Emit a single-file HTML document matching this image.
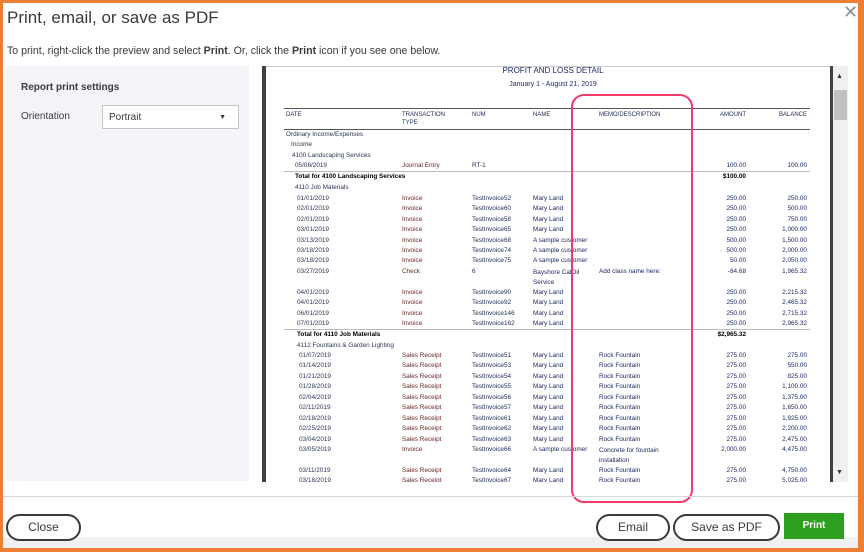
<!DOCTYPE html>
<html><head><meta charset="utf-8"><style>
*{margin:0;padding:0;box-sizing:border-box}
html,body{width:864px;height:552px;overflow:hidden}
body{background:#e8e8e8;position:relative;font-family:"Liberation Sans",sans-serif}
#frame{position:absolute;left:0;top:0;width:864px;height:552px;border:3px solid #ec7f35;border-bottom-width:4px;border-right-width:6px;background:#fff}
.a{position:absolute;white-space:nowrap}
.r{position:absolute;left:0;width:864px;height:9px;font-size:6.4px;line-height:8px}
.r span{position:absolute;white-space:nowrap}
.d{color:#2a3656}.t{color:#6a2626}.n{color:#1e2a55}.m{color:#1e2a60}
.am{color:#1e2a66;right:118px;text-align:right}.bl{color:#1e2a66;right:57px;text-align:right}
.b{font-weight:bold;color:#000}
.btn{position:absolute;top:514px;height:27px;border:2px solid #393a3d;border-radius:14px;font-size:12px;line-height:23px;text-align:center;color:#393a3d;background:#fff;white-space:nowrap}
#rows{position:absolute;left:0;top:2px;width:864px;height:480px}
</style></head><body>
<div id="frame"></div>
<div class="a" style="left:7px;top:8px;font-size:17px;color:#393a3d">Print, email, or save as PDF</div>
<div class="a" style="left:843px;top:2px;font-size:18px;color:#8d9096;font-weight:300">✕</div>
<div class="a" style="left:7px;top:45px;font-size:10.6px;color:#393a3d">To print, right-click the preview and select <b style="font-weight:600">Print</b>. Or, click the <b style="font-weight:600">Print</b> icon if you see one below.</div>
<div class="a" style="left:6px;top:66px;width:243px;height:415px;background:#f4f5f8"></div>
<div class="a" style="left:21px;top:82px;font-size:10px;color:#393a3d;font-weight:600">Report print settings</div>
<div class="a" style="left:21px;top:111px;font-size:10px;color:#393a3d">Orientation</div>
<div class="a" style="left:102px;top:105px;width:137px;height:24px;background:#fff;border:1px solid #c4c4c4;font-size:10px;line-height:24px;padding-left:6px;color:#393a3d">Portrait<span style="position:absolute;right:12px;top:0;font-size:7px">▼</span></div>
<div class="a" style="left:262px;top:66px;width:4px;height:416px;background:#404040"></div>
<div class="a" style="left:266px;top:66px;width:564px;height:416px;background:#fff;border-top:1px solid #ccc"></div>
<div class="a" style="left:830px;top:66px;width:3px;height:416px;background:#404040"></div>
<div class="a" style="left:833px;top:66px;width:15px;height:416px;background:#f0f0f0"></div>
<div class="a" style="left:836px;top:73px;font-size:7px;color:#333">▲</div>
<div class="a" style="left:834px;top:90px;width:13px;height:30px;background:#c1c1c1"></div>
<div class="a" style="left:836px;top:469px;font-size:7px;color:#333">▼</div>
<div class="a" style="left:0;width:864px;text-align:center;top:66px;font-size:8px;color:#1e2a66;padding-left:242px">PROFIT AND LOSS DETAIL</div>
<div class="a" style="left:0;width:864px;text-align:center;top:81px;font-size:7px;color:#1e2a66;padding-left:242px">January 1 - August 21, 2019</div>
<div class="a" style="left:284px;top:108px;width:526px;height:1px;background:#555"></div>
<div class="a" style="left:284px;top:129px;width:526px;height:1px;background:#555"></div>
<div class="a" style="left:284px;top:171px;width:526px;height:1px;background:#bbb"></div>
<div class="a" style="left:284px;top:329px;width:526px;height:1px;background:#bbb"></div>
<div id="rows">
<div class="r" style="top:109px;font-size:6px;color:#1e2a55"><span style="left:286px">DATE</span><span style="left:402px">TRANSACTION<br>TYPE</span><span style="left:472px">NUM</span><span style="left:533px">NAME</span><span style="left:599px">MEMO/DESCRIPTION</span><span style="right:118px">AMOUNT</span><span style="right:57px">BALANCE</span></div>
<div class="r" style="top:129px"><span class="d" style="left:286px">Ordinary Income/Expenses</span></div>
<div class="r" style="top:139px"><span class="d" style="left:291px">Income</span></div>
<div class="r" style="top:150px"><span class="d" style="left:292px">4100 Landscaping Services</span></div>
<div class="r" style="top:160px"><span class="d" style="left:295px">05/06/2019</span><span class="t" style="left:402px">Journal Entry</span><span class="n" style="left:472px">RT-1</span><span class="am">100.00</span><span class="bl">100.00</span></div>
<div class="r" style="top:171px"><span class="b" style="left:295px">Total for 4100 Landscaping Services</span><span class="am b">$100.00</span></div>
<div class="r" style="top:182px"><span class="d" style="left:295px">4110 Job Materials</span></div>
<div class="r" style="top:193px"><span class="d" style="left:297px">01/01/2019</span><span class="t" style="left:402px">Invoice</span><span class="n" style="left:472px">TestInvoice52</span><span class="m" style="left:533px">Mary Land</span><span class="am">250.00</span><span class="bl">250.00</span></div>
<div class="r" style="top:203px"><span class="d" style="left:297px">02/01/2019</span><span class="t" style="left:402px">Invoice</span><span class="n" style="left:472px">TestInvoice60</span><span class="m" style="left:533px">Mary Land</span><span class="am">250.00</span><span class="bl">500.00</span></div>
<div class="r" style="top:214px"><span class="d" style="left:297px">02/01/2019</span><span class="t" style="left:402px">Invoice</span><span class="n" style="left:472px">TestInvoice58</span><span class="m" style="left:533px">Mary Land</span><span class="am">250.00</span><span class="bl">750.00</span></div>
<div class="r" style="top:224px"><span class="d" style="left:297px">03/01/2019</span><span class="t" style="left:402px">Invoice</span><span class="n" style="left:472px">TestInvoice65</span><span class="m" style="left:533px">Mary Land</span><span class="am">250.00</span><span class="bl">1,000.00</span></div>
<div class="r" style="top:235px"><span class="d" style="left:297px">03/13/2019</span><span class="t" style="left:402px">Invoice</span><span class="n" style="left:472px">TestInvoice68</span><span class="m" style="left:533px">A sample customer</span><span class="am">500.00</span><span class="bl">1,500.00</span></div>
<div class="r" style="top:245px"><span class="d" style="left:297px">03/18/2019</span><span class="t" style="left:402px">Invoice</span><span class="n" style="left:472px">TestInvoice74</span><span class="m" style="left:533px">A sample customer</span><span class="am">500.00</span><span class="bl">2,000.00</span></div>
<div class="r" style="top:255px"><span class="d" style="left:297px">03/18/2019</span><span class="t" style="left:402px">Invoice</span><span class="n" style="left:472px">TestInvoice75</span><span class="m" style="left:533px">A sample customer</span><span class="am">50.00</span><span class="bl">2,050.00</span></div>
<div class="r" style="top:266px;height:20px"><span class="d" style="left:297px">03/27/2019</span><span class="t" style="left:402px">Check</span><span class="n" style="left:472px">6</span><span class="m" style="left:533px;line-height:10px">Bayshore CalOil<br>Service</span><span class="m" style="left:599px">Add class name here:</span><span class="am">-84.68</span><span class="bl">1,965.32</span></div>
<div class="r" style="top:287px"><span class="d" style="left:297px">04/01/2019</span><span class="t" style="left:402px">Invoice</span><span class="n" style="left:472px">TestInvoice90</span><span class="m" style="left:533px">Mary Land</span><span class="am">250.00</span><span class="bl">2,215.32</span></div>
<div class="r" style="top:297px"><span class="d" style="left:297px">04/01/2019</span><span class="t" style="left:402px">Invoice</span><span class="n" style="left:472px">TestInvoice92</span><span class="m" style="left:533px">Mary Land</span><span class="am">250.00</span><span class="bl">2,465.32</span></div>
<div class="r" style="top:308px"><span class="d" style="left:297px">06/01/2019</span><span class="t" style="left:402px">Invoice</span><span class="n" style="left:472px">TestInvoice146</span><span class="m" style="left:533px">Mary Land</span><span class="am">250.00</span><span class="bl">2,715.32</span></div>
<div class="r" style="top:318px"><span class="d" style="left:297px">07/01/2019</span><span class="t" style="left:402px">Invoice</span><span class="n" style="left:472px">TestInvoice162</span><span class="m" style="left:533px">Mary Land</span><span class="am">250.00</span><span class="bl">2,965.32</span></div>
<div class="r" style="top:329px"><span class="b" style="left:297px">Total for 4110 Job Materials</span><span class="am b">$2,965.32</span></div>
<div class="r" style="top:340px"><span class="d" style="left:297px">4112 Fountains &amp; Garden Lighting</span></div>
<div class="r" style="top:350px"><span class="d" style="left:299px">01/07/2019</span><span class="t" style="left:402px">Sales Receipt</span><span class="n" style="left:472px">TestInvoice51</span><span class="m" style="left:533px">Mary Land</span><span class="m" style="left:599px">Rock Fountain</span><span class="am">275.00</span><span class="bl">275.00</span></div>
<div class="r" style="top:360px"><span class="d" style="left:299px">01/14/2019</span><span class="t" style="left:402px">Sales Receipt</span><span class="n" style="left:472px">TestInvoice53</span><span class="m" style="left:533px">Mary Land</span><span class="m" style="left:599px">Rock Fountain</span><span class="am">275.00</span><span class="bl">550.00</span></div>
<div class="r" style="top:371px"><span class="d" style="left:299px">01/21/2019</span><span class="t" style="left:402px">Sales Receipt</span><span class="n" style="left:472px">TestInvoice54</span><span class="m" style="left:533px">Mary Land</span><span class="m" style="left:599px">Rock Fountain</span><span class="am">275.00</span><span class="bl">825.00</span></div>
<div class="r" style="top:381px"><span class="d" style="left:299px">01/28/2019</span><span class="t" style="left:402px">Sales Receipt</span><span class="n" style="left:472px">TestInvoice55</span><span class="m" style="left:533px">Mary Land</span><span class="m" style="left:599px">Rock Fountain</span><span class="am">275.00</span><span class="bl">1,100.00</span></div>
<div class="r" style="top:392px"><span class="d" style="left:299px">02/04/2019</span><span class="t" style="left:402px">Sales Receipt</span><span class="n" style="left:472px">TestInvoice56</span><span class="m" style="left:533px">Mary Land</span><span class="m" style="left:599px">Rock Fountain</span><span class="am">275.00</span><span class="bl">1,375.00</span></div>
<div class="r" style="top:402px"><span class="d" style="left:299px">02/11/2019</span><span class="t" style="left:402px">Sales Receipt</span><span class="n" style="left:472px">TestInvoice57</span><span class="m" style="left:533px">Mary Land</span><span class="m" style="left:599px">Rock Fountain</span><span class="am">275.00</span><span class="bl">1,650.00</span></div>
<div class="r" style="top:413px"><span class="d" style="left:299px">02/18/2019</span><span class="t" style="left:402px">Sales Receipt</span><span class="n" style="left:472px">TestInvoice61</span><span class="m" style="left:533px">Mary Land</span><span class="m" style="left:599px">Rock Fountain</span><span class="am">275.00</span><span class="bl">1,925.00</span></div>
<div class="r" style="top:423px"><span class="d" style="left:299px">02/25/2019</span><span class="t" style="left:402px">Sales Receipt</span><span class="n" style="left:472px">TestInvoice62</span><span class="m" style="left:533px">Mary Land</span><span class="m" style="left:599px">Rock Fountain</span><span class="am">275.00</span><span class="bl">2,200.00</span></div>
<div class="r" style="top:434px"><span class="d" style="left:299px">03/04/2019</span><span class="t" style="left:402px">Sales Receipt</span><span class="n" style="left:472px">TestInvoice63</span><span class="m" style="left:533px">Mary Land</span><span class="m" style="left:599px">Rock Fountain</span><span class="am">275.00</span><span class="bl">2,475.00</span></div>
<div class="r" style="top:444px;height:20px"><span class="d" style="left:299px">03/05/2019</span><span class="t" style="left:402px">Invoice</span><span class="n" style="left:472px">TestInvoice66</span><span class="m" style="left:533px">A sample customer</span><span class="m" style="left:599px;line-height:10px">Concrete for fountain<br>installation</span><span class="am">2,000.00</span><span class="bl">4,475.00</span></div>
<div class="r" style="top:465px"><span class="d" style="left:299px">03/11/2019</span><span class="t" style="left:402px">Sales Receipt</span><span class="n" style="left:472px">TestInvoice64</span><span class="m" style="left:533px">Mary Land</span><span class="m" style="left:599px">Rock Fountain</span><span class="am">275.00</span><span class="bl">4,750.00</span></div>
</div>
<div class="a" style="left:266px;top:477px;width:564px;height:5px;overflow:hidden"><div class="r" style="top:0;left:-266px"><span class="d" style="left:299px">03/18/2019</span><span class="t" style="left:402px">Sales Receipt</span><span class="n" style="left:472px">TestInvoice67</span><span class="m" style="left:533px">Mary Land</span><span class="m" style="left:599px">Rock Fountain</span><span class="am">275.00</span><span class="bl">5,025.00</span></div></div>
<div class="a" style="left:571px;top:94px;width:122px;height:409px;border:2.5px solid #ee3b6a;border-radius:13px"></div>
<div class="a" style="left:3px;top:496px;width:855px;height:1px;background:#d4d7dc"></div>
<div class="a" style="left:3px;top:537px;width:855px;height:11px;background:#f0f0f0"></div>
<div class="btn" style="left:6px;width:75px">Close</div>
<div class="btn" style="left:596px;width:74px">Email</div>
<div class="btn" style="left:673px;width:107px">Save as PDF</div>
<div class="a" style="left:784px;top:513px;width:60px;height:26px;background:#2ca01c;color:#fff;font-size:10px;font-weight:bold;line-height:26px;text-align:center">Print</div>
</body></html>
